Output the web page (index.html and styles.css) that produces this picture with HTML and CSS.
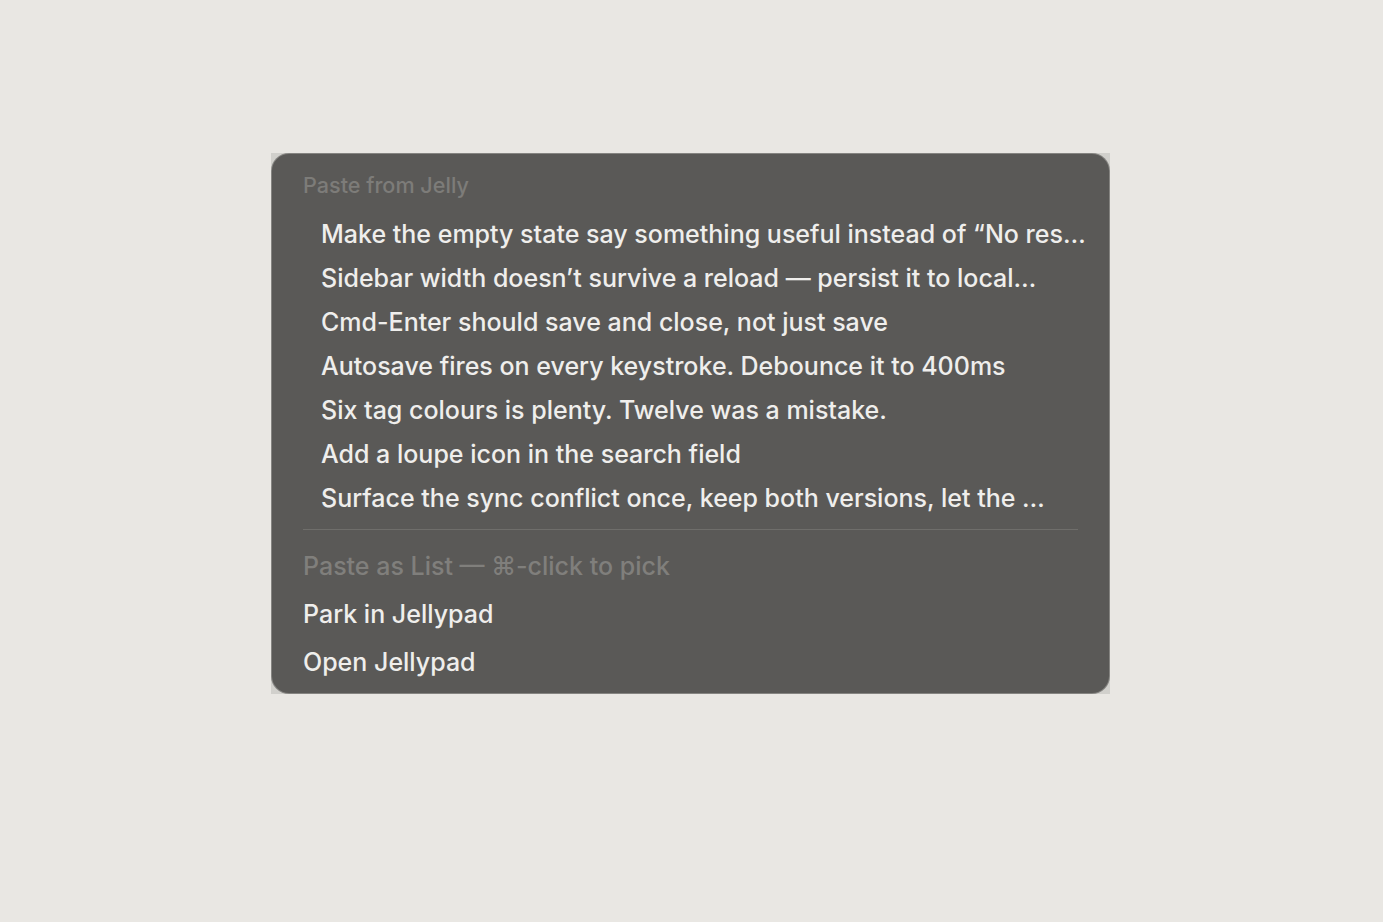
FILE: index.html
```html
<!DOCTYPE html>
<html>
<head>
<meta charset="utf-8">
<link rel="stylesheet" href="styles.css">
</head>
<body>
<div class="stage">
  <div class="frame">
    <div class="menu">
      <div class="header">Paste from Jelly</div>
      <ul class="items">
        <li class="item">Make the empty state say something useful instead of “No res…</li>
        <li class="item">Sidebar width doesn’t survive a reload — persist it to local…</li>
        <li class="item">Cmd-Enter should save and close, not just save</li>
        <li class="item">Autosave fires on every keystroke. Debounce it to 400ms</li>
        <li class="item">Six tag colours is plenty. Twelve was a mistake.</li>
        <li class="item">Add a loupe icon in the search field</li>
        <li class="item">Surface the sync conflict once, keep both versions, let the …</li>
      </ul>
      <div class="separator"></div>
      <div class="action disabled">Paste as List — ⌘-click to pick</div>
      <div class="action">Park in Jellypad</div>
      <div class="action">Open Jellypad</div>
    </div>
  </div>
</div>
</body>
</html>
```

FILE: styles.css
```css
html, body {
  margin: 0;
  padding: 0;
  background: #e9e7e3;
  font-family: Inter, "Noto Sans", "Liberation Sans", sans-serif;
}

.stage {
  padding: 153px 0 0 271px;
  height: 922px;
  box-sizing: border-box;
}

.frame {
  box-sizing: border-box;
  width: 839px;
  height: 541px;
  padding: 1px;
  background: #d1d0cc;
}

.menu {
  box-sizing: border-box;
  width: 100%;
  height: 100%;
  background: #5a5957;
  border-radius: 17px;
  box-shadow: 0 0 0 1px rgba(40, 40, 38, 0.45);
  padding: 11px 31px 7px 31px;
  display: flex;
  flex-direction: column;
  overflow: hidden;
}

.header {
  height: 40px;
  line-height: 40px;
  font-size: 21.6px;
  font-weight: 500;
  color: #7d7c79;
  white-space: nowrap;
}

.items {
  list-style: none;
  margin: 7px 0 0 0;
  padding: 0;
}

.item {
  height: 44px;
  line-height: 44px;
  padding-left: 18px;
  font-size: 25px;
  font-weight: 500;
  color: #efeeec;
  white-space: nowrap;
}

.separator {
  height: 1px;
  margin: 9px 0 12px 0;
  background: #6f6e6b;
}

.action {
  height: 48px;
  line-height: 48px;
  font-size: 25px;
  font-weight: 500;
  color: #efeeec;
  white-space: nowrap;
}

.action.disabled {
  color: #807f7c;
}
```
